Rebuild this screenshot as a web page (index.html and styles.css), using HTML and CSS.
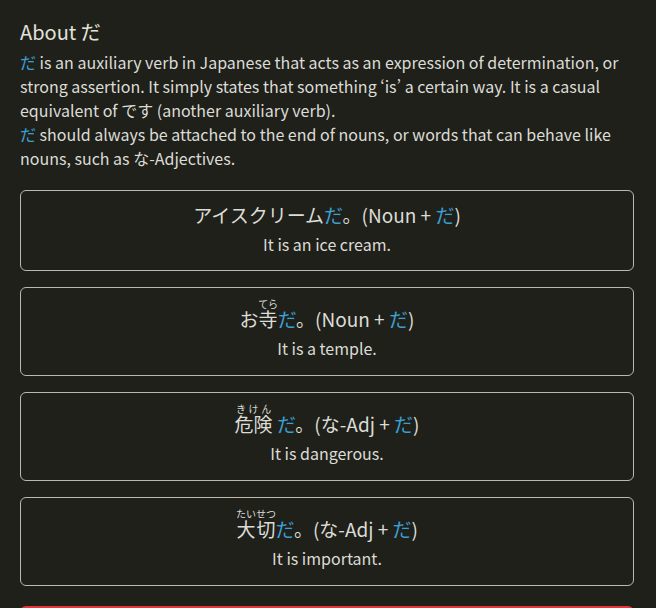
FILE: index.html
```html
<!DOCTYPE html>
<html lang="ja">
<head>
    <meta charset="UTF-8">
    <meta name="viewport" content="width=device-width, initial-scale=1.0">
    <title>About だ</title>
    <link rel="stylesheet" href="styles.css">
</head>
<body>
    <div class="lesson">
        <h2 class="title">About <span lang="ja">だ</span></h2>
        <p class="about">
            <span class="hl">だ</span> is an auxiliary verb in Japanese that acts as an expression of determination, or strong assertion. It simply states that something ‘is’ a certain way. It is a casual equivalent of です (another auxiliary verb).<br>
            <span class="hl">だ</span> should always be attached to the end of nouns, or words that can behave like nouns, such as な-Adjectives.
        </p>

        <div class="example">
            <div class="jp">アイスクリーム<span class="hl">だ</span>。(Noun + <span class="hl">だ</span>)</div>
            <div class="en">It is an ice cream.</div>
        </div>

        <div class="example with-ruby">
            <div class="jp">お<ruby>寺<rt>てら</rt></ruby><span class="hl">だ</span>。(Noun + <span class="hl">だ</span>)</div>
            <div class="en">It is a temple.</div>
        </div>

        <div class="example with-ruby">
            <div class="jp"><ruby>危険<rt>きけん</rt></ruby> <span class="hl">だ</span>。(な-Adj + <span class="hl">だ</span>)</div>
            <div class="en">It is dangerous.</div>
        </div>

        <div class="example with-ruby">
            <div class="jp"><ruby>大切<rt>たいせつ</rt></ruby><span class="hl">だ</span>。(な-Adj + <span class="hl">だ</span>)</div>
            <div class="en">It is important.</div>
        </div>

        <button class="next">Next</button>
    </div>
</body>
</html>
```

FILE: styles.css
```css
body {
    font-family: 'Noto Sans CJK JP', 'Noto Sans', sans-serif;
    background-color: #1f201a; /* dark background */
    color: #dcdcd6;
    margin: 0;
    padding: 20px 22px 20px 20px;
}
.title {
    font-size: 20px;
    font-weight: normal;
    line-height: 24px;
    margin: 0 0 6px;
    color: #e2e2dc;
}
.about {
    font-size: 16px;
    line-height: 24px;
    margin: 0 0 20px;
}
.hl {
    color: #3c9fd4; /* blue highlight */
}
.example {
    border: 1px solid #b9b9b2;
    border-radius: 6px;
    padding: 9px 0 14px;
    margin-bottom: 16px;
    text-align: center;
}
.example.with-ruby {
    padding: 11px 0 15px; /* room for the furigana */
}
.jp {
    font-size: 19px;
    line-height: 30px;
}
.jp rt {
    font-size: 10px;
    line-height: 14px;
}
.en {
    font-size: 16px;
    line-height: 24px;
    margin-top: 2px;
}
.next {
    display: block;
    width: 100%;
    margin-top: 20px;
    height: 44px;
    background-color: #e8343a;
    color: white;
    border: none;
    border-radius: 6px;
    font-size: 16px;
}
```
